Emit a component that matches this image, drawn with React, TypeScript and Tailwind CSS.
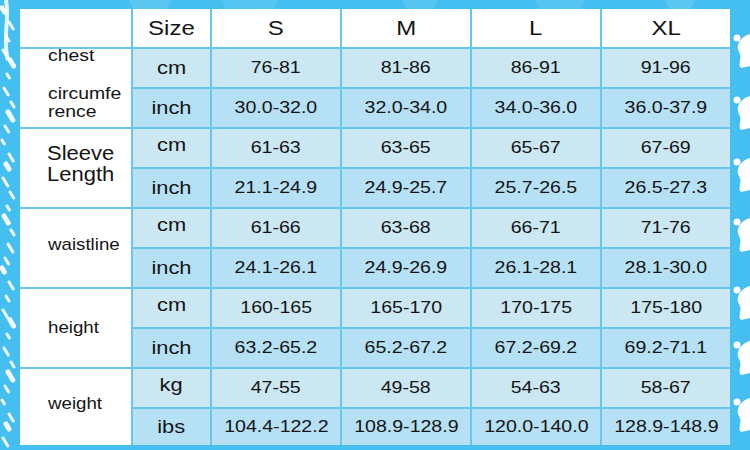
import React from "react";

type Unit = { unit: string; values: string[] };
type Group = { key: string; units: Unit[] };

const groups: Group[] = [
  {
    key: "chest",
    units: [
      { unit: "cm", values: ["76-81", "81-86", "86-91", "91-96"] },
      { unit: "inch", values: ["30.0-32.0", "32.0-34.0", "34.0-36.0", "36.0-37.9"] },
    ],
  },
  {
    key: "sleeve",
    units: [
      { unit: "cm", values: ["61-63", "63-65", "65-67", "67-69"] },
      { unit: "inch", values: ["21.1-24.9", "24.9-25.7", "25.7-26.5", "26.5-27.3"] },
    ],
  },
  {
    key: "waist",
    units: [
      { unit: "cm", values: ["61-66", "63-68", "66-71", "71-76"] },
      { unit: "inch", values: ["24.1-26.1", "24.9-26.9", "26.1-28.1", "28.1-30.0"] },
    ],
  },
  {
    key: "height",
    units: [
      { unit: "cm", values: ["160-165", "165-170", "170-175", "175-180"] },
      { unit: "inch", values: ["63.2-65.2", "65.2-67.2", "67.2-69.2", "69.2-71.1"] },
    ],
  },
  {
    key: "weight",
    units: [
      { unit: "kg", values: ["47-55", "49-58", "54-63", "58-67"] },
      { unit: "ibs", values: ["104.4-122.2", "108.9-128.9", "120.0-140.0", "128.9-148.9"] },
    ],
  },
];

function Label({ k }: { k: string }) {
  if (k === "chest") {
    return (
      <div className="flex flex-col pl-[28px] text-[17px] leading-[18px]">
        <span className="inline-block origin-left scale-x-[1.14] -mt-[9px]">chest</span>
        <span className="inline-block origin-left scale-x-[1.14] mt-[20px]">circumfe</span>
        <span className="inline-block origin-left scale-x-[1.14]">rence</span>
      </div>
    );
  }
  if (k === "sleeve") {
    return (
      <div className="flex flex-col pl-[27px] text-[20px] leading-[21px] -mt-[8px]">
        <span className="inline-block origin-left scale-x-[1.1]">Sleeve</span>
        <span className="inline-block origin-left scale-x-[1.1]">Length</span>
      </div>
    );
  }
  const text = k === "waist" ? "waistline" : k;
  const off = k === "height" ? "-mt-[1px]" : "-mt-[6px]";
  return (
    <div className={`pl-[28px] text-[17px] leading-[20px] ${off}`}>
      <span className="inline-block origin-left scale-x-[1.1]">{text}</span>
    </div>
  );
}

function Decoration() {
  const leftStreaks: [number, number, number, number, number][] = [];
  for (let i = 0; i < 34; i++) {
    const y = 8 + i * 13 + ((i * 5) % 4);
    const x = 2 + ((i * 7) % 10);
    const len = 4 + ((i * 3) % 5);
    leftStreaks.push([x, y, x + len * 0.6, y + len, i % 4 === 0 ? 5 : 3]);
  }
  const rightWaves = [38, 100, 162, 222, 290, 345, 402];
  return (
    <svg className="absolute inset-0" width="750" height="450" viewBox="0 0 750 450">
      <rect x="0" y="0" width="750" height="450" fill="#45bff0" />
      <circle cx="150" cy="-6" r="22" fill="#ffffff" opacity="0.12" />
      <circle cx="250" cy="-10" r="30" fill="#ffffff" opacity="0.1" />
      <circle cx="420" cy="-4" r="18" fill="#ffffff" opacity="0.1" />
      <circle cx="560" cy="-8" r="26" fill="#ffffff" opacity="0.1" />
      <circle cx="680" cy="-4" r="16" fill="#ffffff" opacity="0.12" />
      <path d="M6 0 C10 20 2 40 8 60" stroke="#ffffff" strokeWidth="4" fill="none" opacity="0.85" />
      {leftStreaks.map(([x1, y1, x2, y2, w], i) => (
        <line
          key={i}
          x1={x1}
          y1={y1}
          x2={x2}
          y2={y2}
          stroke="#ffffff"
          strokeWidth={w}
          strokeLinecap="round"
          opacity={0.92}
        />
      ))}
      {rightWaves.map((y, i) => (
        <path
          key={i}
          d={`M750 ${y - 4} C742 ${y - 2} 735 ${y + 6} 739 ${y + 14} C743 ${y + 20} 737 ${y + 26} 741 ${y + 30} L750 ${y + 28} Z`}
          fill="#ffffff"
        />
      ))}
      {rightWaves.map((y, i) => (
        <circle key={`c${i}`} cx={737} cy={y} r={3.5} fill="#ffffff" />
      ))}
    </svg>
  );
}

export default function App() {
  const font = "font-['Liberation_Sans',Arial,sans-serif]";
  return (
    <div className={`relative w-[750px] h-[450px] overflow-hidden ${font} text-[#141414]`}>
      <Decoration />
      <div className="relative pl-[20px] pt-[9px]">
        <div className="grid w-[710px] grid-cols-[111px_77px_128px_128px_128px_128px] grid-rows-[38px_repeat(9,38px)_36px] gap-[2px] bg-[#66c6ec]">
          <div className="bg-white" />
          {["Size", "S", "M", "L", "XL"].map((h) => (
            <div key={h} className="flex items-center justify-center bg-white text-[20px]">
              <span className="inline-block scale-x-[1.2]">{h}</span>
            </div>
          ))}
          {groups.map((g, gi) => (
            <React.Fragment key={g.key}>
              <div
                className="flex items-center bg-white"
                style={{ gridRow: `${gi * 2 + 2} / span 2`, gridColumn: "1" }}
              >
                <Label k={g.key} />
              </div>
              {g.units.map((u, ui) => {
                const bg = ui === 0 ? "bg-[#cbe7f2]" : "bg-[#b6e0f4]";
                return (
                  <React.Fragment key={u.unit}>
                    <div className={`flex items-center justify-center ${bg} text-[19px]`}>
                      <span className={`inline-block scale-x-[1.15] ${ui === 0 && gi > 0 ? "-mt-[5px]" : ""}`}>{u.unit}</span>
                    </div>
                    {u.values.map((v, vi) => (
                      <div key={vi} className={`flex items-center justify-center ${bg} text-[17px]`}>
                        <span className="inline-block scale-x-[1.15]">{v}</span>
                      </div>
                    ))}
                  </React.Fragment>
                );
              })}
            </React.Fragment>
          ))}
        </div>
      </div>
    </div>
  );
}
